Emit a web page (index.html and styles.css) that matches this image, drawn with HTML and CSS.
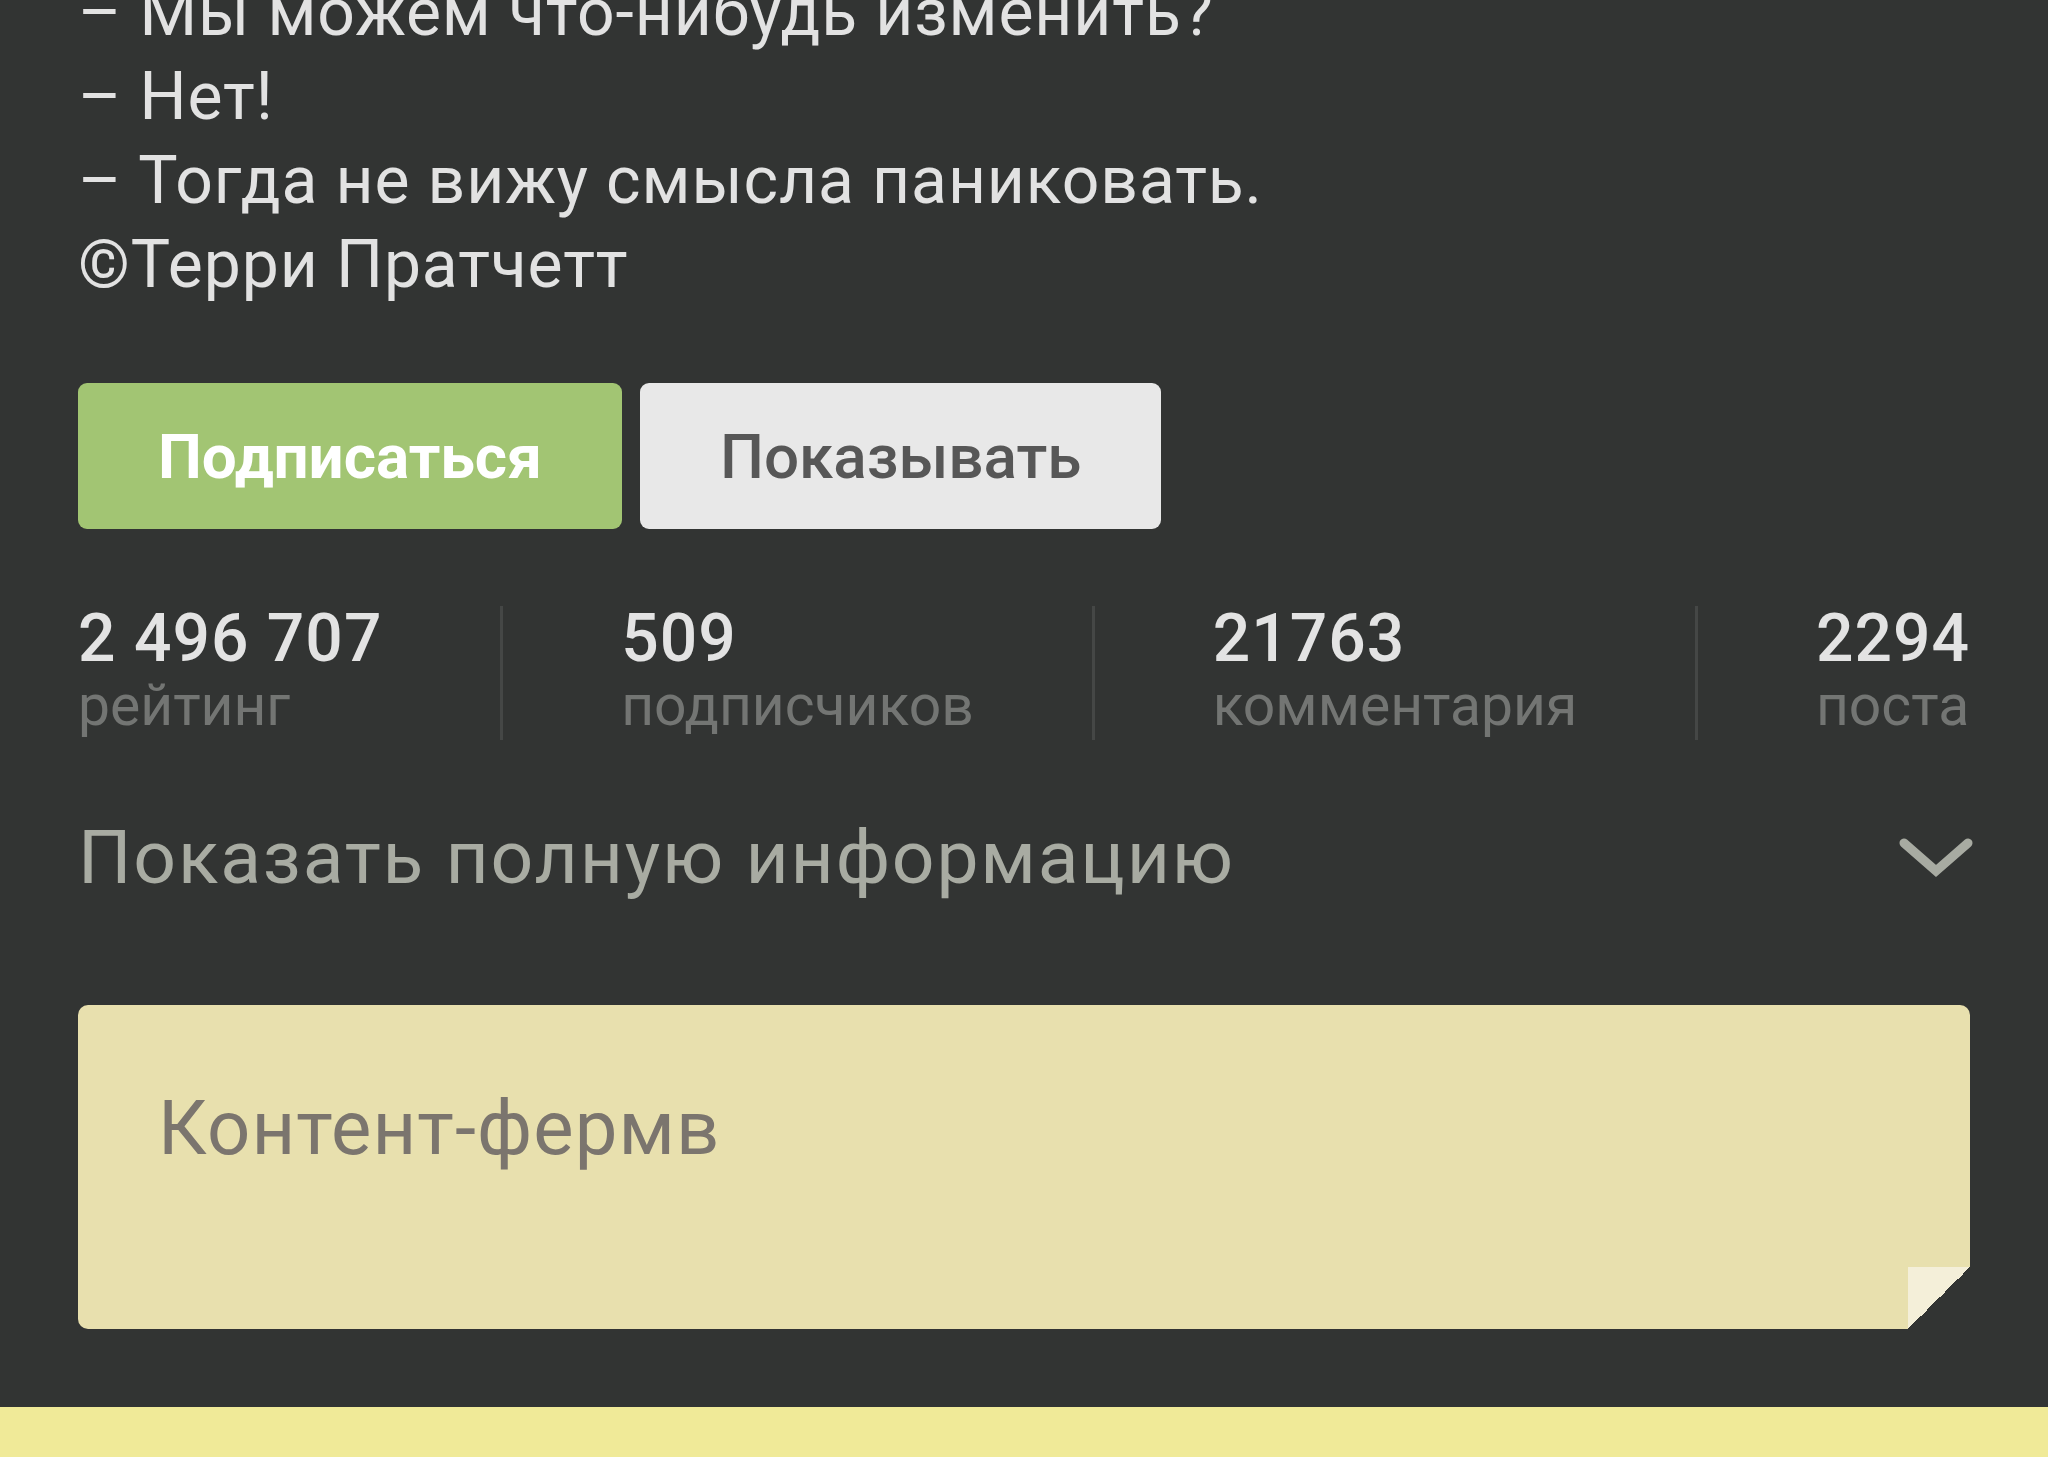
FILE: index.html
```html
<!DOCTYPE html>
<html lang="ru">
<head>
  <meta charset="UTF-8">
  <title>Профиль</title>
  <link rel="stylesheet" href="styles.css">
</head>
<body>
  <div class="profile">
    <div class="quote">
      <p>– Мы можем что-нибудь изменить?</p>
      <p>– Нет!</p>
      <p>– Тогда не вижу смысла паниковать.</p>
      <p>©Терри Пратчетт</p>
    </div>

    <div class="actions">
      <button class="btn btn-subscribe">Подписаться</button>
      <button class="btn btn-show">Показывать</button>
    </div>

    <div class="stats">
      <div class="stat">
        <div class="stat-num">2 496 707</div>
        <div class="stat-label">рейтинг</div>
      </div>
      <div class="divider"></div>
      <div class="stat">
        <div class="stat-num">509</div>
        <div class="stat-label">подписчиков</div>
      </div>
      <div class="divider"></div>
      <div class="stat">
        <div class="stat-num">21763</div>
        <div class="stat-label">комментария</div>
      </div>
      <div class="divider"></div>
      <div class="stat">
        <div class="stat-num">2294</div>
        <div class="stat-label">поста</div>
      </div>
    </div>

    <div class="more">
      <span>Показать полную информацию</span>
      <svg class="chevron" width="76" height="46" viewBox="0 0 76 46">
        <polyline points="6,8 38,36 70,8" fill="none" stroke="#a8aba2" stroke-width="9" stroke-linecap="round" stroke-linejoin="miter"/>
      </svg>
    </div>

    <div class="note">
      <span>Контент-фермв</span>
    </div>
  </div>

  <div class="bottom-strip"></div>
</body>
</html>
```

FILE: styles.css
```css
* {
  box-sizing: border-box;
  margin: 0;
  padding: 0;
}

body {
  background: #323433;
  font-family: Roboto, "Noto Sans", "Liberation Sans", sans-serif;
  overflow: hidden;
}

.profile {
  padding: 0 78px;
}

.quote {
  margin-top: -29px;
  color: #e2e2e2;
  font-size: 66px;
  line-height: 84px;
  letter-spacing: 0.9px;
}

.actions {
  display: flex;
  gap: 18px;
  margin-top: 76px;
}

.btn {
  height: 146px;
  padding: 0 80px;
  border: none;
  border-radius: 9px;
  font-family: Roboto, "Noto Sans", sans-serif;
  font-size: 62px;
  font-weight: 500;
}

.btn-subscribe {
  background: #a2c573;
  color: #fff;
  font-weight: 700;
}

.btn-show {
  background: #e8e8e8;
  color: #575757;
}

.stats {
  display: flex;
  justify-content: space-between;
  margin-top: 77px;
}

.stat-num {
  color: #e3e3e3;
  font-size: 66px;
  font-weight: 500;
  line-height: 66px;
  letter-spacing: 1px;
}

.stat-label {
  color: #737573;
  font-size: 57px;
  line-height: 68px;
}

.divider {
  width: 3px;
  height: 134px;
  background: #454746;
}

.more {
  display: flex;
  justify-content: space-between;
  align-items: center;
  margin-top: 80px;
  color: #a8aba2;
  font-size: 75px;
  line-height: 75px;
  letter-spacing: 1.8px;
}

.chevron {
  margin-right: -4px;
}

.note {
  position: relative;
  height: 324px;
  margin-top: 110px;
  padding: 85px 0 0 80px;
  background: #e8e0ae;
  border-radius: 10px;
  color: #7b756e;
  font-size: 76px;
  line-height: 76px;
  letter-spacing: 1.1px;
}

.note::after {
  content: "";
  position: absolute;
  right: 0;
  bottom: 0;
  width: 62px;
  height: 62px;
  background: linear-gradient(to top left, #323433 50%, #f4efd9 50%);
}

.bottom-strip {
  height: 120px;
  margin-top: 78px;
  background: #f0ea98;
}
```
